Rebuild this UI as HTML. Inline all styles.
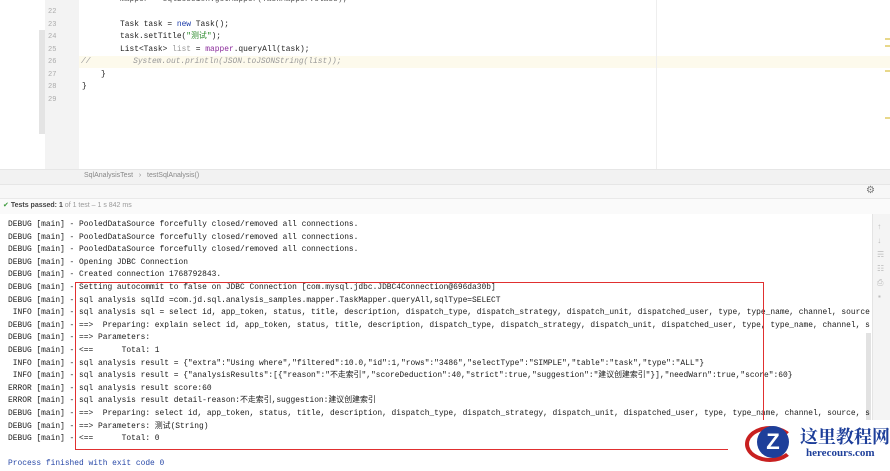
<!DOCTYPE html><html><head><style>
*{margin:0;padding:0;box-sizing:border-box}
body{width:890px;height:465px;overflow:hidden;background:#fff;position:relative;font-family:"Liberation Mono","Noto Sans CJK SC",monospace;font-size:7.9px;color:#222}
.a{position:absolute}
.l{position:absolute;white-space:pre;line-height:12.6px}
.n{color:#aaa;font-size:7px}
</style></head><body>
<div class="a" style="left:0;top:0;width:890px;height:170px;background:#fff"></div>
<div class="a" style="left:39px;top:30px;width:6px;height:104px;background:#e4e4e4"></div>
<div class="a" style="left:45px;top:0;width:34px;height:170px;background:#f3f3f3"></div>
<div class="a" style="left:79px;top:56px;width:811px;height:12px;background:#fdfaec"></div>
<div class="a" style="left:656px;top:0;width:1px;height:170px;background:#eee"></div>
<div class="a" style="left:885px;top:38px;width:5px;height:2px;background:#e8d88a"></div>
<div class="a" style="left:885px;top:45px;width:5px;height:2px;background:#e8d88a"></div>
<div class="a" style="left:885px;top:70px;width:5px;height:2px;background:#e8d88a"></div>
<div class="a" style="left:885px;top:117px;width:5px;height:2px;background:#e8d88a"></div>
<div class="l" style="left:120px;top:-6px;color:#555">mapper = sqlSession.getMapper(TaskMapper.class);</div>
<div class="l n" style="left:48px;top:6px">22</div>
<div class="l n" style="left:48px;top:18.5px">23</div>
<div class="l" style="left:120px;top:18.5px">Task task = <span style="color:#1a3aa8">new</span> Task();</div>
<div class="l n" style="left:48px;top:31px">24</div>
<div class="l" style="left:120px;top:31px">task.setTitle(<span style="color:#2a8a2a">"测试"</span>);</div>
<div class="l n" style="left:48px;top:43.5px">25</div>
<div class="l" style="left:120px;top:43.5px">List&lt;Task&gt; <span style="color:#999">list</span> = <span style="color:#8a2a9a">mapper</span>.queryAll(task);</div>
<div class="l n" style="left:48px;top:56px">26</div>
<div class="l" style="left:81px;top:56px;color:#999;font-style:italic">//         System.out.println(JSON.toJSONString(list));</div>
<div class="l n" style="left:48px;top:68.5px">27</div>
<div class="l" style="left:101px;top:68.5px">}</div>
<div class="l n" style="left:48px;top:81px">28</div>
<div class="l" style="left:82px;top:81px">}</div>
<div class="l n" style="left:48px;top:93.5px">29</div>
<div class="a" style="left:0;top:169px;width:890px;height:15px;background:#f2f2f2;border-top:1px solid #e6e6e6"></div>
<div class="a" style="left:84px;top:172px;font-family:'Liberation Sans',sans-serif;font-size:7px;color:#888;white-space:pre">SqlAnalysisTest   ›   testSqlAnalysis()</div>
<div class="a" style="left:0;top:184px;width:890px;height:14px;background:#f7f7f7;border-top:1px solid #e6e6e6"></div>
<div class="a" style="left:866px;top:185px;color:#777;font-size:10px">⚙</div>
<div class="a" style="left:0;top:198px;width:890px;height:16px;background:#fafafa;border-top:1px solid #e9e9e9"></div>
<div class="a" style="left:3px;top:201px;font-family:'Liberation Sans',sans-serif;font-size:7px;color:#444;white-space:pre"><span style="color:#3a9a3a">✔</span> <b>Tests passed: 1</b> <span style="color:#999">of 1 test – 1 s 842 ms</span></div>
<div class="a" style="left:872px;top:214px;width:18px;height:251px;background:#f4f4f4;border-left:1px solid #e4e4e4"></div>
<div class="a" style="left:877px;top:221px;color:#bbb;font-size:8px;line-height:14px">↑<br>↓<br>☴<br>☷<br>⎙<br>▪</div>
<div class="a" style="left:866px;top:333px;width:5px;height:110px;background:#e2e2e2"></div>
<div style="position:absolute;left:8px;top:219px;color:#1a1a1a">
<div class="l" style="top:0">DEBUG [main] - PooledDataSource forcefully closed/removed all connections.</div>
<div class="l" style="top:12.6px">DEBUG [main] - PooledDataSource forcefully closed/removed all connections.</div>
<div class="l" style="top:25.2px">DEBUG [main] - PooledDataSource forcefully closed/removed all connections.</div>
<div class="l" style="top:37.8px">DEBUG [main] - Opening JDBC Connection</div>
<div class="l" style="top:50.4px">DEBUG [main] - Created connection 1768792843.</div>
<div class="l" style="top:63px">DEBUG [main] - Setting autocommit to false on JDBC Connection [com.mysql.jdbc.JDBC4Connection@696da30b]</div>
<div class="l" style="top:75.6px">DEBUG [main] - sql analysis sqlId =com.jd.sql.analysis_samples.mapper.TaskMapper.queryAll,sqlType=SELECT</div>
<div class="l" style="top:88.2px"> INFO [main] - sql analysis sql = select id, app_token, status, title, description, dispatch_type, dispatch_strategy, dispatch_unit, dispatched_user, type, type_name, channel, source</div>
<div class="l" style="top:100.8px">DEBUG [main] - ==>  Preparing: explain select id, app_token, status, title, description, dispatch_type, dispatch_strategy, dispatch_unit, dispatched_user, type, type_name, channel, s</div>
<div class="l" style="top:113.4px">DEBUG [main] - ==> Parameters: </div>
<div class="l" style="top:126px">DEBUG [main] - &lt;==      Total: 1</div>
<div class="l" style="top:138.6px"> INFO [main] - sql analysis result = {"extra":"Using where","filtered":10.0,"id":1,"rows":"3486","selectType":"SIMPLE","table":"task","type":"ALL"}</div>
<div class="l" style="top:151.2px"> INFO [main] - sql analysis result = {"analysisResults":[{"reason":"不走索引","scoreDeduction":40,"strict":true,"suggestion":"建议创建索引"}],"needWarn":true,"score":60}</div>
<div class="l" style="top:163.8px">ERROR [main] - sql analysis result score:60</div>
<div class="l" style="top:176.4px">ERROR [main] - sql analysis result detail-reason:不走索引,suggestion:建议创建索引</div>
<div class="l" style="top:189px">DEBUG [main] - ==>  Preparing: select id, app_token, status, title, description, dispatch_type, dispatch_strategy, dispatch_unit, dispatched_user, type, type_name, channel, source, s</div>
<div class="l" style="top:201.6px">DEBUG [main] - ==> Parameters: 测试(String)</div>
<div class="l" style="top:214.2px">DEBUG [main] - &lt;==      Total: 0</div>
<div class="l" style="top:239.4px;color:#2a4aa8">Process finished with exit code 0</div>
</div>
<div class="a" style="left:75px;top:282px;width:689px;height:168px;border:1.5px solid #e03030"></div>
<div class="a" style="left:728px;top:420px;width:162px;height:45px;background:#fff"></div>
<div class="a" style="left:745px;top:426px;width:50px;height:36px;border-radius:50%;border:4px solid #c82020;border-right-color:transparent"></div>
<div class="a" style="left:757px;top:426px;width:32px;height:32px;border-radius:50%;background:#1e3f9a;color:#fff;font:bold 22px 'Liberation Sans',sans-serif;text-align:center;line-height:32px">Z</div>
<div class="a" style="left:800px;top:423px;font:bold 18px 'Noto Serif CJK SC',serif;color:#1e3f9a;white-space:nowrap">这里教程网</div>
<div class="a" style="left:806px;top:447px;font:bold 11px 'Liberation Serif',serif;color:#1e3f9a">herecours.com</div>
</body></html>
